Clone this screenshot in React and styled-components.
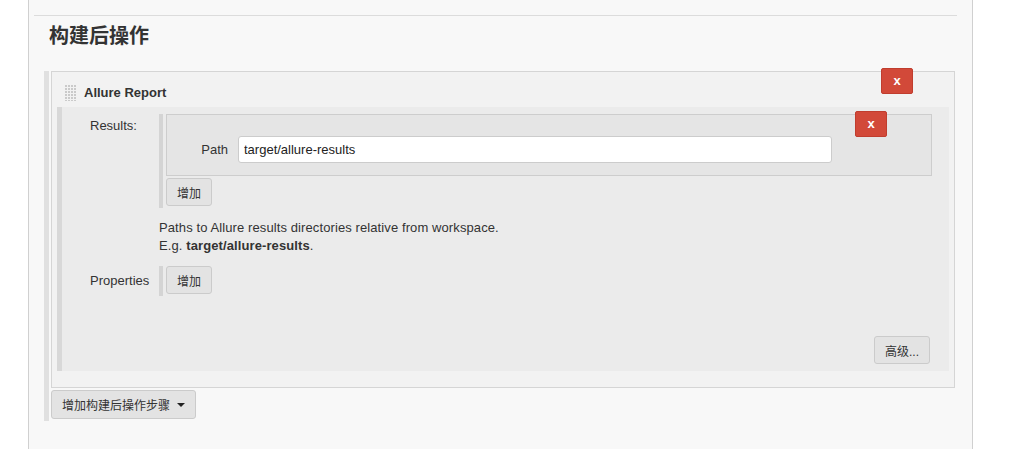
import React from 'react';
import styled, { createGlobalStyle } from 'styled-components';

const GlobalStyle = createGlobalStyle`
  body {
    margin: 0;
    background: #fff;
    font-family: "Liberation Sans", Arial, "Noto Sans CJK SC", sans-serif;
    font-size: 13px;
    color: #333;
  }
`;

const Page = styled.div`
  display: flex;
  height: 449px;
  overflow: hidden;
`;

const Panel = styled.div`
  margin-left: 28px;
  width: 943px;
  background: #f8f8f8;
  border-left: 1px solid #d0d0d0;
  border-right: 1px solid #d0d0d0;
`;

const Rule = styled.div`
  margin: 15px 0 0 5px;
  width: 923px;
  height: 1px;
  background: #dcdcdc;
`;

const Heading = styled.h2`
  margin: 8px 0 23px 20px;
  font-size: 20px;
  line-height: 24px;
  font-weight: bold;
  color: #333;
`;

const Section = styled.div`
  margin-left: 15px;
  padding-left: 2px;
  border-left: 5px solid #e0e0e0;
  padding-bottom: 2px;
`;

const Box = styled.div`
  position: relative;
  width: 902px;
  border: 1px solid #d5d5d5;
  background: #f2f2f2;
  padding-bottom: 16px;
`;

const DeleteButton = styled.button`
  position: absolute;
  top: ${p => p.$top}px;
  right: ${p => p.$right}px;
  width: 32px;
  height: 26px;
  padding: 0 0 2px;
  border: 1px solid #c03d2e;
  border-radius: 2px;
  background: #d24939;
  color: #fff;
  font-family: inherit;
  font-size: 13px;
  font-weight: bold;
`;

const Header = styled.div`
  display: flex;
  align-items: center;
  height: 29px;
  padding: 6px 0 0 12px;
  gap: 8px;
`;

const Handle = styled.div`
  width: 12px;
  height: 17px;
  background:
    linear-gradient(90deg, #f2f2f2 1px, transparent 1px) 0 0 / 3px 3px,
    linear-gradient(#f2f2f2 1px, #cacaca 1px) 0 0 / 3px 3px;
`;

const Title = styled.span`
  font-weight: bold;
  font-size: 13px;
`;

const Inner = styled.div`
  margin: 0 5px;
  border-left: 5px solid #d8d8d8;
  background: #ebebeb;
  padding: 7px 17px 7px 0;
  display: grid;
  grid-template-columns: 97px 1fr;
`;

const Label = styled.div`
  padding-left: 28px;
  padding-top: ${p => p.$top}px;
  line-height: 18px;
`;

const Repeat = styled.div`
  border-left: 4px solid #d4d4d4;
  padding-left: 3px;
  padding-bottom: 2px;
`;

const RepeatBox = styled.div`
  position: relative;
  border: 1px solid #cdcdcd;
  background: #e5e5e5;
  padding: 21px 0 12px;
  display: flex;
  align-items: center;
`;

const FieldLabel = styled.label`
  width: 61px;
  text-align: right;
  margin-right: 10px;
`;

const Input = styled.input`
  box-sizing: border-box;
  width: 594px;
  height: 27px;
  padding: 0 5px;
  border: 1px solid #ccc;
  border-radius: 3px;
  background: #fff;
  font-family: inherit;
  font-size: 13px;
  color: #222;
  outline: none;
`;

const Button = styled.button`
  box-sizing: border-box;
  height: ${p => p.$h || 28}px;
  padding: 0 ${p => p.$pad || 10}px;
  margin-top: ${p => p.$mt || 0}px;
  border: 1px solid #cbcbcb;
  border-radius: 3px;
  background: #e3e3e3;
  color: #333;
  font-family: inherit;
  font-size: 12px;
  display: flex;
  align-items: center;
  gap: 7px;
`;

const Help = styled.div`
  grid-column: 2;
  margin: 11px 0;
  line-height: 18px;
  letter-spacing: 0.1px;
`;

const Footer = styled.div`
  grid-column: 1 / span 2;
  display: flex;
  justify-content: flex-end;
  padding-top: 40px;
  margin-right: 2px;
`;

const Caret = styled.span`
  width: 0;
  height: 0;
  border-left: 4px solid transparent;
  border-right: 4px solid transparent;
  border-top: 4px solid #222;
`;

export default function App() {
  return (
    <Page>
      <GlobalStyle />
      <Panel>
        <Rule />
        <Heading>构建后操作</Heading>
        <Section>
          <Box>
            <DeleteButton $top={-4} $right={41}>x</DeleteButton>
            <Header>
              <Handle />
              <Title>Allure Report</Title>
            </Header>
            <Inner>
              <Label $top={3}>Results:</Label>
              <Repeat>
                <RepeatBox>
                  <DeleteButton $top={-4} $right={44}>x</DeleteButton>
                  <FieldLabel>Path</FieldLabel>
                  <Input defaultValue="target/allure-results" />
                </RepeatBox>
                <Button $mt={2}>增加</Button>
              </Repeat>
              <Help>
                Paths to Allure results directories relative from workspace.
                <br />
                E.g. <b>target/allure-results</b>.
              </Help>
              <Label $top={6}>Properties</Label>
              <Repeat>
                <Button>增加</Button>
              </Repeat>
              <Footer>
                <Button>高级...</Button>
              </Footer>
            </Inner>
          </Box>
          <Button $mt={2} $h={29}>增加构建后操作步骤<Caret /></Button>
        </Section>
      </Panel>
    </Page>
  );
}
